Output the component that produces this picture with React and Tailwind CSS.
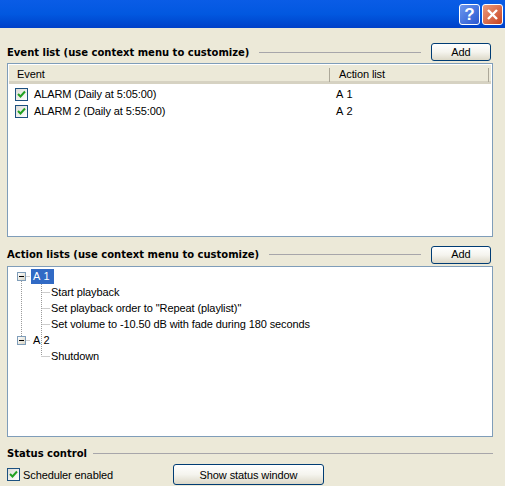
import React from "react";

const font = "font-['Liberation_Sans','Noto_Sans',sans-serif]";

const Check = ({ className }) => (
  <span className={`flex h-[13px] w-[13px] items-center justify-center border border-[#1c5180] bg-gradient-to-br from-[#dcdcd7] to-white ${className || ""}`}>
    <svg width="9" height="9" viewBox="0 0 9 9">
      <path d="M1 4 L3.5 6.5 L8 1.5" fill="none" stroke="#21a121" strokeWidth="2" />
    </svg>
  </span>
);

const AddButton = ({ children, className }) => (
  <button className={`flex items-center justify-center rounded-[3px] border border-[#003c74] bg-gradient-to-b from-white via-[#f5f4ee] to-[#dcd8c8] text-[11px] text-black ${className}`}>
    {children}
  </button>
);

const Heading = ({ children }) => (
  <span className="font-['DejaVu_Sans',sans-serif] text-[10px] font-bold tracking-normal whitespace-nowrap text-black">{children}</span>
);

const Minus = () => (
  <span className="flex h-[9px] w-[9px] items-center justify-center border border-[#7f9db9] bg-gradient-to-br from-white to-[#d8d4c4]">
    <span className="h-px w-[5px] bg-black" />
  </span>
);

const events = [
  { name: "ALARM (Daily at 5:05:00)", list: "A 1" },
  { name: "ALARM 2 (Daily at 5:55:00)", list: "A 2" },
];

const App = () => {
  return (
    <div className={`flex h-[486px] w-[505px] flex-col overflow-hidden bg-[#ece9d8] text-[11px] tracking-[-0.1px] text-black ${font}`}>
      {/* title bar */}
      <div className="flex h-[28px] items-center justify-end gap-[2px] bg-gradient-to-b from-[#0a5ce6] via-[#0258e0] to-[#0040c8] pr-[2px]">
        <div className="flex h-[21px] w-[21px] items-center justify-center rounded-[3px] border border-white bg-gradient-to-br from-[#6d97ee] to-[#2a56d0] text-[17px] leading-none font-bold text-white">?</div>
        <div className="flex h-[21px] w-[21px] items-center justify-center rounded-[3px] border border-white bg-gradient-to-br from-[#ea9a7c] to-[#c8401a]">
          <svg width="13" height="13" viewBox="0 0 13 13">
            <path d="M2 2 L11 11 M11 2 L2 11" stroke="white" strokeWidth="2.4" />
          </svg>
        </div>
      </div>

      <div className="flex flex-1 flex-col pl-[7px] pr-[12px]">
        {/* event list */}
        <div className="mt-[15px] flex h-[18px] items-center pr-[2px]">
          <Heading>Event list (use context menu to customize)</Heading>
          <div className="mx-[10px] h-px flex-1 bg-[#a7a6aa]" />
          <AddButton className="h-[18px] w-[60px]">Add</AddButton>
        </div>
        <div className="mt-[2px] h-[174px] border border-[#7f9db9] bg-white p-px">
          <div className="flex h-[19px] items-center border-b-[3px] border-[#d6d2c2] bg-[#ece9d8] pt-[3px]">
            <span className="w-[320px] pl-[8px]">Event</span>
            <span className="h-[14px] w-px bg-[#aca899]" />
            <span className="flex-1 pl-[9px]">Action list</span>
            <span className="h-[14px] w-px bg-[#aca899]" />
            <span className="w-[2px]" />
          </div>
          <div className="pt-[2px]">
            {events.map((ev) => (
              <div key={ev.name} className="flex h-[17px] items-center">
                <span className="flex w-[320px] items-center pl-[6px]">
                  <Check />
                  <span className="ml-[6px]">{ev.name}</span>
                </span>
                <span className="pl-[7px] [word-spacing:1px]">{ev.list}</span>
              </div>
            ))}
          </div>
        </div>

        {/* action lists */}
        <div className="mt-[8px] flex h-[19px] items-center pr-[2px]">
          <Heading>Action lists (use context menu to customize)</Heading>
          <div className="mx-[10px] h-px flex-1 bg-[#a7a6aa]" />
          <AddButton className="h-[18px] w-[60px]">Add</AddButton>
        </div>
        <div className="relative mt-[2px] h-[171px] border border-[#7f9db9] bg-white pt-[1px]">
          <svg className="absolute top-0 left-0" width="80" height="100">
            <path d="M13.5 14 V73 M13.5 9.5 H22 M13.5 73.5 H22 M33.5 17 V89 M33.5 25.5 H42 M33.5 41.5 H42 M33.5 57.5 H42 M33.5 89.5 H42" fill="none" stroke="#9a9a9a" strokeDasharray="1 1" />
          </svg>
          <div className="relative flex h-[16px] items-center pl-[9px]">
            <Minus />
            <span className="ml-[5px] flex h-[15px] w-[23px] items-center pl-[2px] whitespace-nowrap bg-[#316ac5] text-white [word-spacing:1px]">A 1</span>
          </div>
          <div className="relative flex h-[16px] items-center pl-[43px]">Start playback</div>
          <div className="relative flex h-[16px] items-center pl-[43px]">Set playback order to "Repeat (playlist)"</div>
          <div className="relative flex h-[16px] items-center pl-[43px]">Set volume to -10.50 dB with fade during 180 seconds</div>
          <div className="relative flex h-[16px] items-center pl-[9px]">
            <Minus />
            <span className="ml-[7px] [word-spacing:1px]">A 2</span>
          </div>
          <div className="relative flex h-[16px] items-center pl-[43px]">Shutdown</div>
        </div>

        {/* status */}
        <div className="mt-[8px] flex h-[16px] items-center">
          <Heading>Status control</Heading>
          <div className="ml-[6px] h-px flex-1 bg-[#a7a6aa]" />
        </div>
        <div className="mt-[3px] flex items-start">
          <Check className="mt-[4px]" />
          <span className="ml-[3px] mt-[3px] w-[150px]">Scheduler enabled</span>
          <AddButton className="h-[21px] w-[151px] pt-[1px]">Show status window</AddButton>
        </div>
      </div>
    </div>
  );
};

export default App;
